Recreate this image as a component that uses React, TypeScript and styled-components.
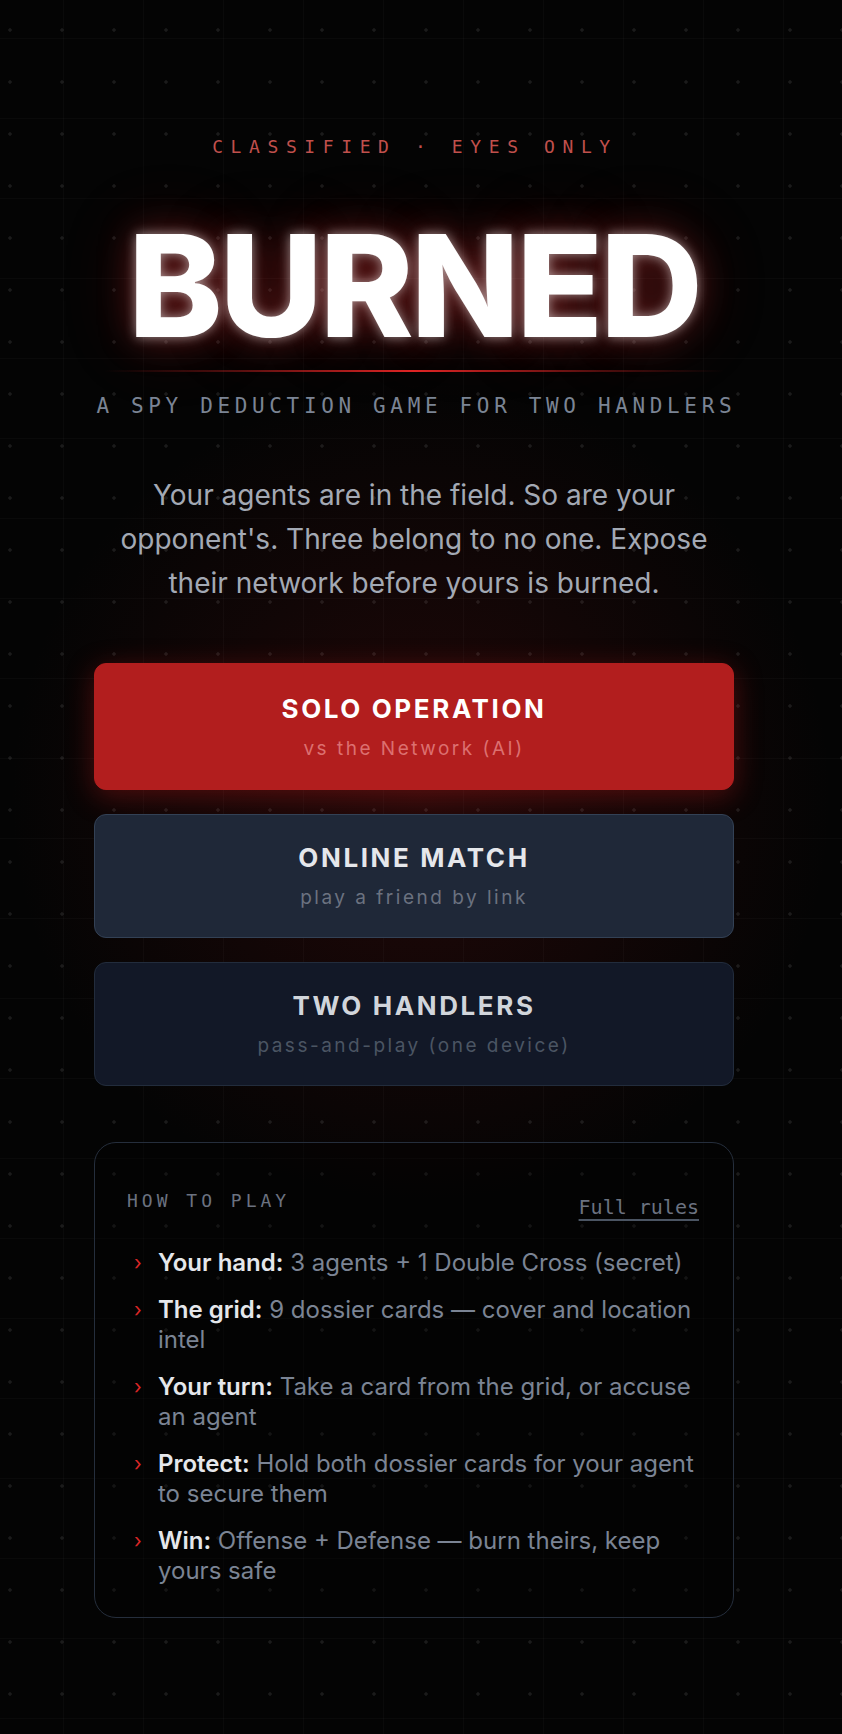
import React from "react";
import styled, { createGlobalStyle } from "styled-components";

const GlobalStyle = createGlobalStyle`
  html, body { margin: 0; padding: 0; background: #040404; }
  * { box-sizing: border-box; }
`;

const Page = styled.div`
  min-height: 100vh;
  font-family: Inter, "Noto Sans", sans-serif;
  background-color: #040404;
  background-image:
    radial-gradient(circle, rgba(255, 255, 255, 0.09) 1.4px, transparent 2px),
    linear-gradient(rgba(255, 255, 255, 0.022) 1px, transparent 1px),
    linear-gradient(90deg, rgba(255, 255, 255, 0.022) 1px, transparent 1px),
    radial-gradient(ellipse 65% 32% at 50% 46%, rgba(110, 20, 20, 0.28), transparent 75%);
  background-size: 52px 52px, 80px 80px, 80px 80px, 100% 100%;
  background-position: -16px 4px, 0 38px, 63px 0, 0 0;
  display: flex;
  justify-content: center;
  padding-right: 14px;
`;

const Column = styled.main`
  width: 640px;
  display: flex;
  flex-direction: column;
  align-items: center;
  padding: 137px 0 117px;
`;

const Eyebrow = styled.div`
  font-family: "DejaVu Sans Mono", "Liberation Mono", monospace;
  font-size: 18px;
  letter-spacing: 7.6px;
  color: #c0504c;
  line-height: 20px;
  margin-right: -2px;
`;

const Title = styled.h1`
  margin: 53px 0 0;
  font-family: Inter, sans-serif;
  font-weight: 800;
  font-size: 142px;
  line-height: 150px;
  letter-spacing: -3px;
  color: #ffffff;
  text-shadow: 0 0 12px rgba(255, 255, 255, 0.55), 0 0 36px rgba(230, 60, 60, 0.35),
    0 0 70px rgba(200, 30, 30, 0.25);
`;

const RedRule = styled.div`
  width: 620px;
  height: 2px;
  margin-top: 10px;
  background: linear-gradient(90deg, transparent, rgba(220, 38, 38, 0.35) 20%, #e02424 50%, rgba(220, 38, 38, 0.35) 80%, transparent);
`;

const Subtitle = styled.div`
  margin-top: 21px;
  font-family: "DejaVu Sans Mono", "Liberation Mono", monospace;
  font-size: 21px;
  letter-spacing: 4.65px;
  color: #7b8494;
  line-height: 26px;
  white-space: nowrap;
  margin-right: -4.65px;
`;

const Lead = styled.p`
  margin: 54px 0 0;
  max-width: 620px;
  text-align: center;
  font-size: 28px;
  line-height: 44px;
  color: #a3a9b4;
`;

const Buttons = styled.div`
  width: 100%;
  display: flex;
  flex-direction: column;
  gap: 24px;
  margin-top: 58px;
`;

type Variant = "primary" | "secondary" | "tertiary";

const variants: Record<Variant, { bg: string; border: string; title: string; sub: string; height: number; shadow: string }> = {
  primary: {
    bg: "#b21e1e",
    border: "#b21e1e",
    title: "#ffffff",
    sub: "#dc7070",
    height: 127,
    shadow: "0 6px 28px rgba(200, 30, 30, 0.35)",
  },
  secondary: {
    bg: "#1f2838",
    border: "#334155",
    title: "#e5e7eb",
    sub: "#6b7280",
    height: 124,
    shadow: "none",
  },
  tertiary: {
    bg: "#121827",
    border: "#222c3c",
    title: "#d1d5db",
    sub: "#4b5563",
    height: 124,
    shadow: "none",
  },
};

const ModeButton = styled.button<{ $variant: Variant }>`
  width: 100%;
  height: ${(p) => variants[p.$variant].height}px;
  border-radius: 12px;
  border: 1.5px solid ${(p) => variants[p.$variant].border};
  background: ${(p) => variants[p.$variant].bg};
  box-shadow: ${(p) => variants[p.$variant].shadow};
  display: flex;
  flex-direction: column;
  align-items: center;
  justify-content: center;
  gap: 14px;
  cursor: pointer;
  font-family: Inter, sans-serif;
  padding: 0;
`;

const ButtonTitle = styled.span<{ $variant: Variant }>`
  font-size: 26px;
  font-weight: 700;
  letter-spacing: 2.6px;
  line-height: 30px;
  color: ${(p) => variants[p.$variant].title};
`;

const ButtonSub = styled.span<{ $variant: Variant }>`
  font-size: 19px;
  letter-spacing: 2.5px;
  line-height: 22px;
  color: ${(p) => variants[p.$variant].sub};
`;

const Card = styled.section`
  width: 100%;
  margin-top: 56px;
  border: 1.5px solid #252e3c;
  border-radius: 22px;
  background: rgba(0, 0, 0, 0.25);
  padding: 46px 34px 31px 32px;
`;

const CardHeader = styled.div`
  display: flex;
  justify-content: space-between;
  align-items: flex-start;
`;

const CardLabel = styled.div`
  font-family: "DejaVu Sans Mono", "Liberation Mono", monospace;
  font-size: 18px;
  letter-spacing: 4px;
  color: #6b7280;
  line-height: 24px;
`;

const RulesLink = styled.a`
  font-family: "DejaVu Sans Mono", "Liberation Mono", monospace;
  font-size: 20px;
  color: #6b7280;
  line-height: 24px;
  margin-top: 6px;
  text-decoration: underline;
  text-underline-offset: 5px;
  text-decoration-thickness: 2px;
  text-decoration-color: #4b5563;
`;

const RuleList = styled.ul`
  list-style: none;
  margin: 29px 0 0;
  padding: 0;
  display: flex;
  flex-direction: column;
  gap: 17px;
`;

const RuleItem = styled.li`
  display: flex;
  gap: 16px;
  font-size: 24px;
  line-height: 30px;
  color: #7b8494;
`;

const Chevron = styled.span`
  color: #dc2626;
  width: 8px;
  flex: none;
  font-size: 20px;
  margin-left: 7px;
`;

const RuleText = styled.span`
  flex: 1;
  strong {
    color: #e5e7eb;
    font-weight: 600;
  }
`;

const modes: { variant: Variant; title: string; sub: string }[] = [
  { variant: "primary", title: "SOLO OPERATION", sub: "vs the Network (AI)" },
  { variant: "secondary", title: "ONLINE MATCH", sub: "play a friend by link" },
  { variant: "tertiary", title: "TWO HANDLERS", sub: "pass-and-play (one device)" },
];

const rules: { label: string; text: string }[] = [
  { label: "Your hand:", text: "3 agents + 1 Double Cross (secret)" },
  { label: "The grid:", text: "9 dossier cards — cover and location intel" },
  { label: "Your turn:", text: "Take a card from the grid, or accuse an agent" },
  { label: "Protect:", text: "Hold both dossier cards for your agent to secure them" },
  { label: "Win:", text: "Offense + Defense — burn theirs, keep yours safe" },
];

export default function App() {
  return (
    <>
      <GlobalStyle />
      <Page>
        <Column>
          <Eyebrow>CLASSIFIED · EYES ONLY</Eyebrow>
          <Title>BURNED</Title>
          <RedRule />
          <Subtitle>A SPY DEDUCTION GAME FOR TWO HANDLERS</Subtitle>
          <Lead>
            Your agents are in the field. So are your opponent's. Three belong to no one. Expose their
            network before yours is burned.
          </Lead>
          <Buttons>
            {modes.map((m) => (
              <ModeButton key={m.title} $variant={m.variant}>
                <ButtonTitle $variant={m.variant}>{m.title}</ButtonTitle>
                <ButtonSub $variant={m.variant}>{m.sub}</ButtonSub>
              </ModeButton>
            ))}
          </Buttons>
          <Card>
            <CardHeader>
              <CardLabel>HOW TO PLAY</CardLabel>
              <RulesLink href="#">Full rules</RulesLink>
            </CardHeader>
            <RuleList>
              {rules.map((r) => (
                <RuleItem key={r.label}>
                  <Chevron>›</Chevron>
                  <RuleText>
                    <strong>{r.label}</strong> {r.text}
                  </RuleText>
                </RuleItem>
              ))}
            </RuleList>
          </Card>
        </Column>
      </Page>
    </>
  );
}
